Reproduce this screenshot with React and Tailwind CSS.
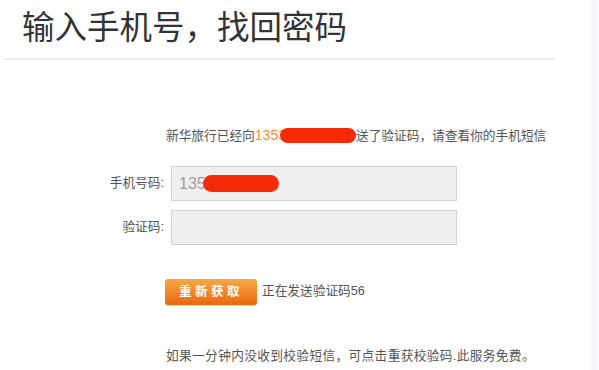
import React from 'react';

export default function App() {
  const font = "font-['Liberation_Sans','Noto_Sans_CJK_SC',sans-serif]";

  return (
    <div className={`w-[599px] h-[370px] bg-white flex overflow-hidden ${font}`}>
      <div className="w-[589px]">
        {/* Title */}
        <h1 className="pl-[22px] pt-[8px] h-[48px] text-[32.5px] leading-[40px] text-[#333] font-normal">
          输入手机号，找回密码
        </h1>
        <div className="mt-[10px] ml-[3px] w-[552px] h-[2px] bg-[#ececec]" />

        {/* Notice */}
        <p className="mt-[65px] pl-[166px] text-[12.7px] leading-[20px] text-[#555] whitespace-nowrap">
          新华旅行已经向<span className="text-[#f0913a] text-[14px]">1353</span>
          <span className="inline-block align-middle -ml-[6px] -mt-[2px] w-[76px] h-[15px] rounded-full bg-[#f42a08]" />
          送了验证码，请查看你的手机短信
        </p>

        {/* Form */}
        <div className="mt-[20px] pl-[100px] flex flex-col gap-[9px]">
          <div className="flex items-center">
            <label className="w-[67px] pr-[3px] text-right text-[12.7px] text-[#555]">手机号码:</label>
            <div className="ml-[4px] w-[286px] h-[35px] bg-[#f0efee] border border-[#d2d2d2] flex items-center pl-[7px]">
              <span className="text-[16px] text-[#a0a0a0]">135</span>
              <span className="inline-block -ml-[3px] w-[76px] h-[17px] rounded-full bg-[#f42a08]" />
            </div>
          </div>
          <div className="flex items-center">
            <label className="w-[67px] pr-[3px] text-right text-[12.7px] text-[#555]">验证码:</label>
            <div className="ml-[4px] w-[286px] h-[35px] bg-[#f0efee] border border-[#d2d2d2]" />
          </div>
        </div>

        {/* Resend */}
        <div className="mt-[34px] pl-[165px] flex items-center">
          <button className="w-[92px] h-[26px] rounded-[3px] bg-gradient-to-b from-[#f9a743] to-[#e8680a] text-white text-[12.5px] font-bold tracking-[3.5px] shadow-[0_1px_1px_rgba(0,0,0,0.15)]">
            重新获取
          </button>
          <span className="ml-[5px] text-[12.7px] text-[#555]">正在发送验证码56</span>
        </div>

        {/* Footnote */}
        <p className="mt-[41px] pl-[166px] text-[12.7px] leading-[20px] tracking-[0.35px] text-[#555] whitespace-nowrap">
          如果一分钟内没收到校验短信，可点击重获校验码.此服务免费。
        </p>
      </div>
      <div className="w-[10px] bg-gradient-to-r from-white via-[#f1f4f8] to-white" />
    </div>
  );
}
